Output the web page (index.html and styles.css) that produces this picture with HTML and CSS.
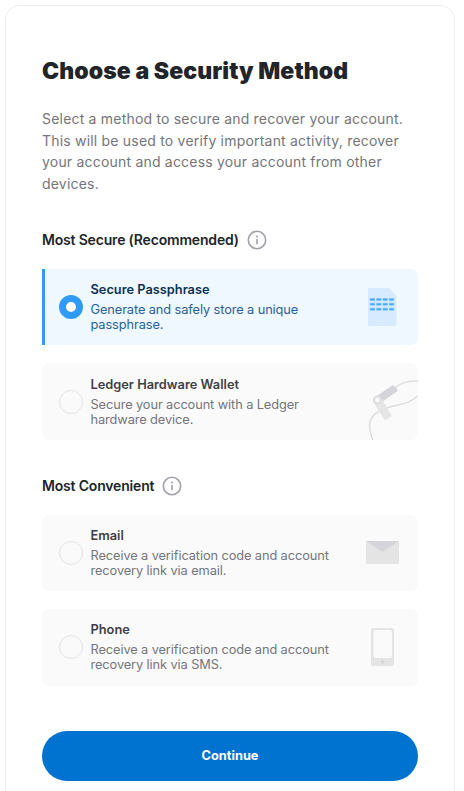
FILE: index.html
```html
<!DOCTYPE html>
<html lang="en">
<head>
<meta charset="utf-8">
<title>Choose a Security Method</title>
<link rel="stylesheet" href="styles.css">
</head>
<body>
<main class="card">
  <h1 class="title"><span>Choose a Security Method</span></h1>
  <p class="intro">Select a method to secure and recover your account. This will be used to verify important activity, recover your account and access your account from other devices.</p>

  <section class="group">
    <h2 class="heading"><span>Most Secure (Recommended)</span>
      <svg class="info" viewBox="0 0 20 20"><circle cx="10" cy="10" r="8.7"/><path d="M10 9v5.2M10 5.6v1.9"/></svg>
    </h2>
    <div class="option selected">
      <span class="radio"></span>
      <div class="text"><h3>Secure Passphrase</h3><p>Generate and safely store a unique passphrase.</p></div>
      <svg class="art" width="66" height="76" viewBox="0 0 66 76">
        <path fill="#d6ebff" d="M17.500 19H37l7.500 8v28.500a1.500 1.500 0 0 1-1.500 1.500H17.500a1.500 1.500 0 0 1-1.500-1.500v-35A1.500 1.500 0 0 1 17.500 19z"/>
        <path stroke="#8fcbff" stroke-width="3" stroke-dasharray="5.200 1.200" d="M17.800 30.500h24.400M17.800 35.300h24.400M17.800 40.200h24.400"/>
        <path stroke="#45a8ff" stroke-width="1.600" stroke-dasharray="4.200 2.200" d="M18.300 30.500h24M18.300 35.300h24M18.300 40.200h24"/>
      </svg>
    </div>
    <div class="option">
      <span class="radio"></span>
      <div class="text"><h3>Ledger Hardware Wallet</h3><p>Secure your account with a Ledger hardware device.</p></div>
      <svg class="art" width="66" height="77" viewBox="0 0 66 77">
        <path fill="none" stroke="#dedee1" stroke-width="1.500" d="M43 24.500C49 20 57 17 66 18.200M66 32.500C58 41 47 41.500 38 44C27 47 18 52 17.500 62C17.500 68 19.500 73 21 78"/>
        <path fill="#d5d5d9" d="M24 33.500L41 22L42.500 24L44 23.500L45.700 28L29 39.500z"/>
        <path fill="#e5e5e6" d="M21.500 39.500L30 36L40 53L33 57.500z"/>
        <circle cx="25.300" cy="37" r="4.500" fill="#dedee1"/><circle cx="25.500" cy="37" r="2.400" fill="#fafafa"/>
      </svg>
    </div>
  </section>

  <section class="group">
    <h2 class="heading"><span>Most Convenient</span>
      <svg class="info" viewBox="0 0 20 20"><circle cx="10" cy="10" r="8.700"/><path d="M10 9v5.200M10 5.600v1.900"/></svg>
    </h2>
    <div class="option">
      <span class="radio"></span>
      <div class="text"><h3>Email</h3><p>Receive a verification code and account recovery link via email.</p></div>
      <svg class="art" width="66" height="76" viewBox="0 0 66 76">
        <path fill="#e4e4e4" d="M14 26h33v21.500a1.500 1.500 0 0 1-1.500 1.500h-30a1.500 1.500 0 0 1-1.500-1.500z"/>
        <path fill="#d5d5d9" d="M14 26h33L30.500 37z"/>
      </svg>
    </div>
    <div class="option">
      <span class="radio"></span>
      <div class="text"><h3>Phone</h3><p>Receive a verification code and account recovery link via SMS.</p></div>
      <svg class="art" width="66" height="76" viewBox="0 0 66 76">
        <rect x="19" y="19" width="23" height="38" rx="2.500" fill="#e4e4e4"/>
        <rect x="21.500" y="21" width="18.500" height="28" rx="2" fill="#fafafa"/>
        <circle cx="30.500" cy="53" r="1.900" fill="#d5d5d9"/>
      </svg>
    </div>
  </section>

  <button class="continue" type="button">Continue</button>
</main>
</body>
</html>
```
FILE: styles.css
```css
* { box-sizing: border-box; }
body {
  margin: 0;
  padding: 5px 5px 0;
  height: 791px;
  overflow: hidden;
  background: #fff;
  font-family: Inter, "Liberation Sans", sans-serif;
  color: #212529;
}
h1, h2, h3, p { margin: 0; }
.card {
  width: 450px;
  height: 786px;
  padding: 50px 36px 0;
  border: 1px solid #eee;
  border-bottom: 0;
  border-radius: 15px 15px 0 0;
}
.title {
  font-size: 23px;
  line-height: 30px;
  font-weight: 900;
  letter-spacing: 0.07px;
  white-space: nowrap;
}
.intro {
  margin-top: 22px;
  font-size: 14px;
  line-height: 21.6px;
  letter-spacing: 0.2px;
  color: #75757a;
}
.group { margin-top: 36px; }
.heading {
  display: flex;
  align-items: center;
  gap: 8px;
  height: 20px;
  margin-bottom: 18.6px;
  font-size: 14px;
  font-weight: 600;
  letter-spacing: -0.18px;
  white-space: nowrap;
}
.heading span { padding-bottom: 1px; }
.info {
  width: 20px;
  height: 20px;
  fill: none;
  stroke: #a1a1aa;
  stroke-width: 1.6;
}
.option {
  display: flex;
  align-items: center;
  height: 76.5px;
  margin-bottom: 18px;
  padding-left: 17px;
  border-radius: 7px;
  background: #fafafa;
  overflow: hidden;
}
.selected {
  height: 76px;
  margin-bottom: 18.5px;
  padding-left: 14px;
  border-left: 3px solid #2f9bf7;
  border-radius: 0 7px 7px 0;
  background: #eff8ff;
}
.radio {
  flex: none;
  width: 24px;
  height: 24px;
  border: 1px solid #e4e4e4;
  border-radius: 50%;
}
.selected .radio {
  border: 7px solid #2f9bf7;
  background: #fff;
}
.text {
  width: 245px;
  margin-left: 7.5px;
  padding-bottom: 1px;
}
.text h3 {
  font-size: 12.8px;
  line-height: 18px;
  font-weight: 600;
  color: #3f3f46;
}
.text p {
  margin-top: 3px;
  font-size: 12.8px;
  line-height: 15px;
  letter-spacing: -0.1px;
  color: #75757a;
}
.selected h3 { color: #0c3256; }
.selected p { color: #2a6098; }
.art {
  flex: none;
  margin-left: auto;
}
.continue {
  display: block;
  width: 100%;
  height: 50px;
  margin-top: 45px;
  padding: 0 0 1px;
  border: 0;
  border-radius: 25px;
  background: #0072d0;
  color: #fff;
  font: 700 12.8px Inter, "Liberation Sans", sans-serif;
}
```
